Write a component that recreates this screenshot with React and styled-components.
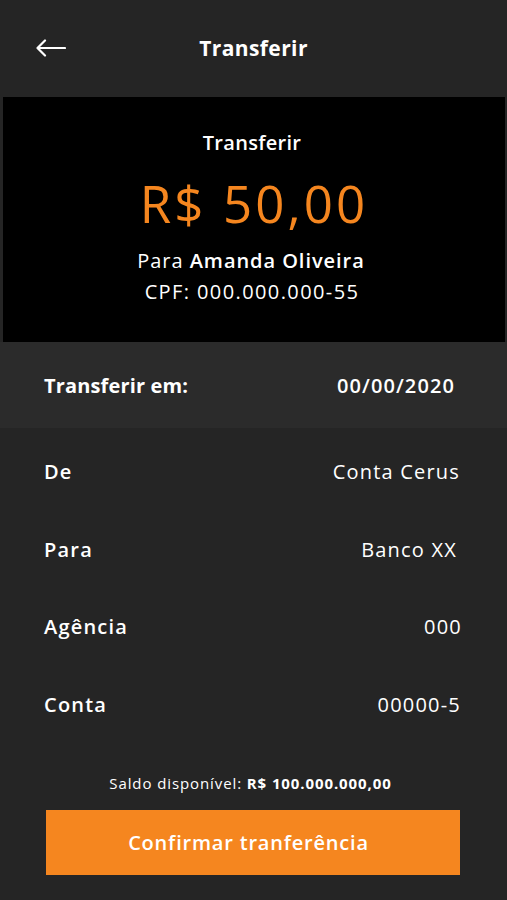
import React from "react";
import styled, { createGlobalStyle } from "styled-components";

const Global = createGlobalStyle`
  html, body { margin: 0; padding: 0; background: #252525; }
  body { font-family: "Open Sans", "Noto Sans", sans-serif; color: #fff; }
  * { box-sizing: border-box; }
`;

const Screen = styled.div`
  width: 507px;
  height: 900px;
  background: #252525;
  display: flex;
  flex-direction: column;
`;

const Header = styled.header`
  height: 97px;
  display: grid;
  grid-template-columns: 80px 1fr 80px;
  align-items: center;
  padding-bottom: 2px;
`;

const BackButton = styled.button`
  background: none;
  border: 0;
  padding: 0 0 0 36px;
  display: flex;
  align-items: center;
  color: #fff;
  cursor: pointer;
`;

const HeaderTitle = styled.h1`
  margin: 0;
  text-align: center;
  font-size: 21px;
  font-weight: 700;
  letter-spacing: 0.4px;
`;

const SummaryCard = styled.section`
  margin: 0 2px 0 3px;
  height: 245px;
  background: #000;
  display: flex;
  flex-direction: column;
  align-items: center;
  padding-top: 34px;
`;

const CardLabel = styled.div`
  font-size: 20px;
  font-weight: 600;
  line-height: 24px;
  letter-spacing: 0.3px;
  margin-right: 4px;
`;

const Amount = styled.div`
  color: #f5861f;
  font-size: 51px;
  font-weight: 400;
  line-height: 60px;
  margin-top: 18px;
  letter-spacing: 3.1px;
`;

const Recipient = styled.div`
  font-size: 20px;
  line-height: 26px;
  margin-top: 15px;
  margin-right: 6px;
  letter-spacing: 0.95px;
  b { font-weight: 600; }
`;

const Cpf = styled.div`
  font-size: 20px;
  line-height: 26px;
  margin-top: 5px;
  margin-right: 4px;
  letter-spacing: 1.4px;
`;

const DateRow = styled.div`
  height: 86px;
  background: #2b2b2b;
  display: flex;
  align-items: center;
  justify-content: space-between;
  padding: 0 52px 0 44px;
`;

const DateLabel = styled.span`
  font-size: 20px;
  font-weight: 700;
  letter-spacing: 0.15px;
`;

const DateValue = styled.span`
  font-size: 20px;
  font-weight: 600;
  letter-spacing: 1.1px;
`;

const Details = styled.div`
  display: flex;
  flex-direction: column;
  padding-top: 5px;
`;

const DetailRow = styled.div`
  height: 77.5px;
  display: flex;
  align-items: center;
  justify-content: space-between;
  padding: 0 ${(p) => p.$pr || 48}px 0 44px;
`;

const DetailLabel = styled.span`
  font-size: 20px;
  font-weight: 600;
  letter-spacing: 1.2px;
`;

const DetailValue = styled.span`
  font-size: 20px;
  font-weight: 400;
  letter-spacing: 1.2px;
`;

const Footer = styled.div`
  display: flex;
  flex-direction: column;
  align-items: center;
  padding-top: 30px;
`;

const Balance = styled.div`
  font-size: 15px;
  line-height: 20px;
  margin-right: 6px;
  letter-spacing: 0.9px;
  b { font-weight: 700; }
`;

const ConfirmButton = styled.button`
  margin-top: 17px;
  margin-right: 2px;
  width: 414px;
  height: 65px;
  background: #f5861f;
  border: 0;
  color: #fff;
  font-family: inherit;
  font-size: 20px;
  font-weight: 600;
  letter-spacing: 0.8px;
  padding: 0 8px 0 0;
  cursor: pointer;
`;

const rows = [
  { label: "De", value: "Conta Cerus", pr: 47 },
  { label: "Para", value: "Banco XX", pr: 50 },
  { label: "Agência", value: "000", pr: 45 },
  { label: "Conta", value: "00000-5", pr: 46 },
];

export default function App() {
  return (
    <Screen>
      <Global />
      <Header>
        <BackButton aria-label="Voltar">
          <svg width="30" height="18" viewBox="0 0 30 18" fill="none">
            <path d="M1.5 9H29M9 1.5L1.5 9L9 16.5" stroke="#fff" strokeWidth="2.2" strokeLinecap="round" strokeLinejoin="round" />
          </svg>
        </BackButton>
        <HeaderTitle>Transferir</HeaderTitle>
        <span />
      </Header>
      <SummaryCard>
        <CardLabel>Transferir</CardLabel>
        <Amount>R$ 50,00</Amount>
        <Recipient>
          Para <b>Amanda Oliveira</b>
        </Recipient>
        <Cpf>CPF: 000.000.000-55</Cpf>
      </SummaryCard>
      <DateRow>
        <DateLabel>Transferir em:</DateLabel>
        <DateValue>00/00/2020</DateValue>
      </DateRow>
      <Details>
        {rows.map((r) => (
          <DetailRow key={r.label} $pr={r.pr}>
            <DetailLabel>{r.label}</DetailLabel>
            <DetailValue>{r.value}</DetailValue>
          </DetailRow>
        ))}
      </Details>
      <Footer>
        <Balance>
          Saldo disponível: <b>R$ 100.000.000,00</b>
        </Balance>
        <ConfirmButton>Confirmar tranferência</ConfirmButton>
      </Footer>
    </Screen>
  );
}
